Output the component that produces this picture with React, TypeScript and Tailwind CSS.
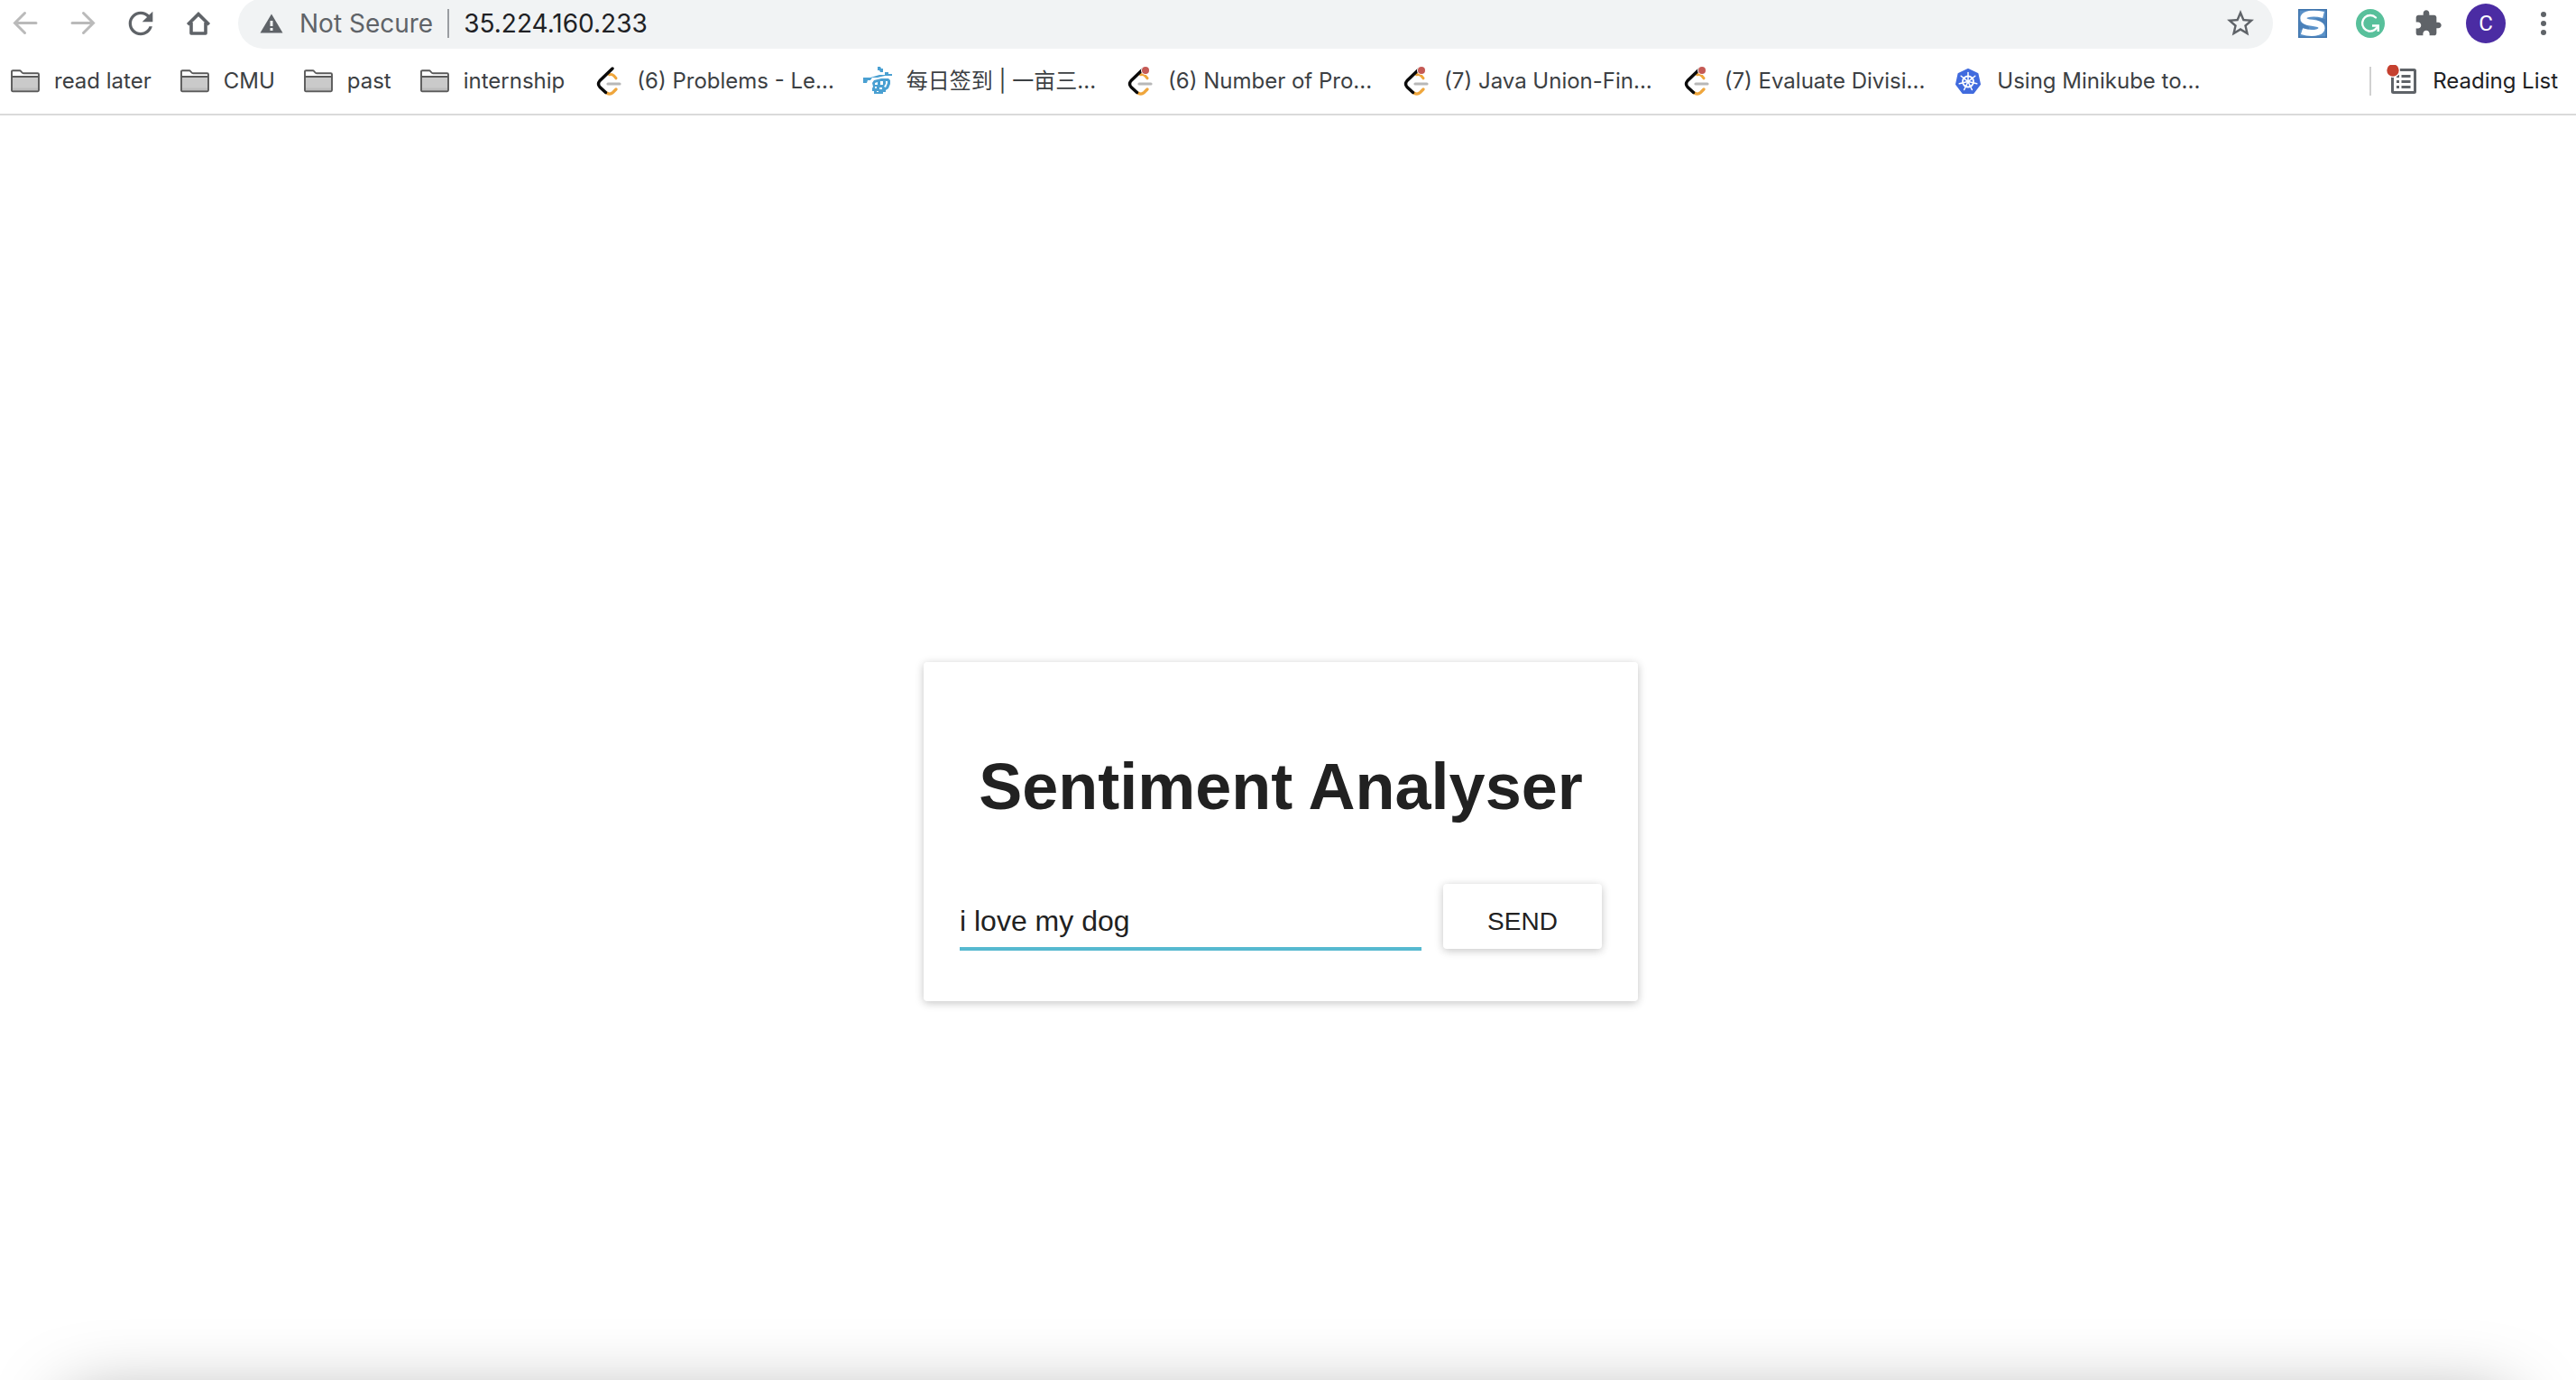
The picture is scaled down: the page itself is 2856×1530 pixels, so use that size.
import React, { useState } from "react";

type IconProps = { className?: string };

const BackIcon = ({ className = "" }: IconProps) => (
  <svg viewBox="0 0 32 32" className={`size-8 ${className}`} fill="none" stroke="currentColor" strokeWidth="3" strokeLinecap="round" aria-hidden="true">
    <path d="M28 15.5H4.5M15.5 4.5l-11 11 11 11" />
  </svg>
);

const ForwardIcon = ({ className = "" }: IconProps) => (
  <svg viewBox="0 0 32 32" className={`size-8 ${className}`} fill="none" stroke="currentColor" strokeWidth="3" strokeLinecap="round" aria-hidden="true">
    <path d="M4 15.5h23.5M16.5 4.5l11 11-11 11" />
  </svg>
);

const ReloadIcon = () => (
  <svg viewBox="0 0 24 24" className="size-10" fill="currentColor" aria-hidden="true">
    <path d="M17.65 6.35C16.2 4.9 14.21 4 12 4c-4.42 0-7.99 3.58-7.99 8s3.57 8 7.99 8c3.73 0 6.84-2.55 7.73-6h-2.08c-.82 2.33-3.04 4-5.65 4-3.31 0-6-2.69-6-6s2.69-6 6-6c1.66 0 3.14.69 4.22 1.78L13 11h7V4l-2.35 2.35z" />
  </svg>
);

const HomeIcon = () => (
  <svg viewBox="0 0 32 32" className="size-8" fill="none" stroke="currentColor" strokeWidth="3.6" strokeLinejoin="round" aria-hidden="true">
    <path d="M4.2 17.2L16 5.6l11.8 11.6" strokeLinejoin="miter" />
    <path d="M8 15v12h16V15" />
  </svg>
);

const WarningIcon = () => (
  <svg viewBox="0 0 26 22" className="h-[22px] w-[26px]" aria-hidden="true">
    <path d="M13 0.5L25.5 21.5H0.5z" fill="#5f6368" />
    <path d="M11.5 8h3v6h-3zM11.5 16h3v3h-3z" fill="#f1f3f4" />
  </svg>
);

const StarIcon = () => (
  <svg viewBox="0 0 24 24" className="size-9" fill="currentColor" aria-hidden="true">
    <path d="M22 9.24l-7.19-.62L12 2 9.19 8.63 2 9.24l5.46 4.73L5.82 21 12 17.27 18.18 21l-1.63-7.03L22 9.24zM12 15.4l-3.76 2.27 1-4.28-3.32-2.88 4.38-.38L12 6.1l1.71 4.04 4.38.38-3.32 2.88 1 4.28L12 15.4z" />
  </svg>
);

const SIcon = () => (
  <svg viewBox="0 0 32 32" className="size-8" fill="none" aria-hidden="true">
    <path d="M0 0h32v32H0z" fill="#5b92c9" />
    <path d="M18 10l12 1v10l-8-8zM2 14l10 6v3H2z" fill="#4a80b9" />
    <path d="M28 6.500C22 5 15 4.500 10 6c-5.500 1.700-5.500 7 0 8.300 4 1 9 1.200 12.500 2.500 5 2 4.500 7.200-.5 8.700-5 1.500-13 .8-18-.8" stroke="#fff" strokeWidth="7" />
    <path d="M.8.8h30.400v30.400H.8z" stroke="#3f74ad" strokeWidth="1.600" />
  </svg>
);

const GIcon = () => (
  <svg viewBox="0 0 32 32" className="size-8" fill="none" aria-hidden="true">
    <circle cx="16" cy="16" r="16" fill="#58c09b" />
    <path d="M22 9.500A8.800 8.800 0 1 0 20.500 23.300l3-3" stroke="#fff" strokeWidth="2.400" strokeLinecap="round" />
    <path d="M18 18.500h6.700v6.500" stroke="#fff" strokeWidth="2.400" />
  </svg>
);

const PuzzleIcon = () => (
  <svg viewBox="0 0 24 24" className="size-8" fill="currentColor" aria-hidden="true">
    <path d="M20.5 11H19V7c0-1.100-.9-2-2-2h-4V3.500C13 2.120 11.880 1 10.500 1S8 2.120 8 3.500V5H4c-1.100 0-1.990.9-1.990 2v3.800H3.500c1.490 0 2.700 1.210 2.700 2.700s-1.210 2.700-2.700 2.700H2V20c0 1.100.9 2 2 2h3.800v-1.500c0-1.490 1.210-2.700 2.700-2.700 1.490 0 2.700 1.210 2.700 2.700V22H17c1.100 0 2-.9 2-2v-4h1.500c1.380 0 2.500-1.120 2.500-2.500S21.880 11 20.500 11z" />
  </svg>
);

const MenuIcon = () => (
  <svg viewBox="0 0 32 32" className="size-8" fill="currentColor" aria-hidden="true">
    <circle cx="16" cy="6" r="3" />
    <circle cx="16" cy="16" r="3" />
    <circle cx="16" cy="26" r="3" />
  </svg>
);

const FolderIcon = () => (
  <svg viewBox="0 0 32 32" className="size-8 shrink-0" aria-hidden="true">
    <path d="M1 9h30v17H1z" fill="#cacaca" />
    <path d="M2 23.5h28V26H2z" fill="#bdbdbd" />
    <path d="M1 10.5V5.500Q1 4.200 2.300 4.200h7.400q1 0 1.500.8l1.300 1.500q.5.7 1.500.7h15.700Q31 7.200 31 8.500v2z" fill="#fff" />
    <path d="M1 26V5.500Q1 4.200 2.300 4.200h7.400q1 0 1.500.8l1.300 1.500q.5.7 1.500.7h15.700Q31 7.200 31 8.500V26q0 1.200-1.200 1.200H2.200Q1 27.200 1 26zM1 11h30" fill="none" stroke="#5a5a5a" strokeWidth="1.900" />
  </svg>
);

const LeetIcon = ({ notify = false }: { notify?: boolean }) => (
  <svg viewBox="0 0 32 32" className="size-8 shrink-0" fill="none" strokeLinecap="round" aria-hidden="true">
    <path d="M17.5 8.800q3-.8 5 1l2.500 3" stroke="#efa63c" strokeWidth="3" />
    <path d="M14.5 29q4 2.300 7-.5l3.500-3.500" stroke="#efa63c" strokeWidth="3.200" />
    <path d="M16 19h13" stroke="#b8b8b8" strokeWidth="3.200" />
    <path d="M21 2L7 15.500q-3 3.500 0 7l6.500 6" stroke="#0b0b0b" strokeWidth="3.400" />
    {notify && <circle cx="23" cy="4" r="5" fill="#fff" />}
    {notify && <circle cx="23" cy="4" r="4" fill="#c55a55" />}
  </svg>
);

const AcreIcon = () => (
  <svg viewBox="0 0 32 32" className="size-8 shrink-0" fill="#4aa0d2" aria-hidden="true">
    <path d="M16 0h3l1 2h2v4h-3l-1-2h-2z" />
    <path d="M0 12h8l10-3h6V6h4v2h4v2h-8l-8 2H10l-2 3H5l-1 3H0z" />
    <path d="M10 18l2-3 8-2h8l2 2v4l-2 5-3 2v2h-3v2H12v-3h-2v-3l1-2zm3 0v2h3v-3zm6-2v4h3v-4zm6 0v3l-2 3 2 1 2-5v-2zm-12 6v2h2v-2zm5 1v2h3v-2zm-3 4v1h2v-1z" fillRule="evenodd" />
  </svg>
);

const KubeIcon = () => (
  <svg viewBox="0 0 32 32" className="size-8 shrink-0" fill="none" aria-hidden="true">
    <path d="M16 3l10.500 5 2.500 11.500L21.800 29H10.200L3 19.500 5.500 8z" fill="#416bde" stroke="#416bde" strokeWidth="2" strokeLinejoin="round" />
    <g stroke="#fff">
      <circle cx="16" cy="16.500" r="6" strokeWidth="1.800" />
      {[0, 1, 2, 3, 4, 5, 6].map((n) => (
        <path key={n} d="M16 15V6.500" strokeWidth="1.500" strokeLinecap="round" transform={`rotate(${(n * 360) / 7} 16 16.5)`} />
      ))}
    </g>
    <circle cx="16" cy="16.500" r="1.800" fill="#fff" />
  </svg>
);

const ReadingListIcon = () => (
  <svg viewBox="0 0 36 36" className="size-9 shrink-0" fill="none" aria-hidden="true">
    <rect x="7.5" y="5.500" width="25" height="25" rx="1" stroke="#5f6368" strokeWidth="3" />
    <path d="M12 12.500h3M12 18.500h3M12 24.500h3M17.500 12.500h10M17.500 18.500h10M17.500 24.500h10" stroke="#5f6368" strokeWidth="2.800" />
    <circle cx="8" cy="6" r="8" fill="#fff" />
    <circle cx="8" cy="6" r="6.700" fill="#c5402f" />
  </svg>
);

const bookmarks: { label: string; icon: React.ReactNode }[] = [
  { label: "read later", icon: <FolderIcon /> },
  { label: "CMU", icon: <FolderIcon /> },
  { label: "past", icon: <FolderIcon /> },
  { label: "internship", icon: <FolderIcon /> },
  { label: "(6) Problems - Le...", icon: <LeetIcon /> },
  { label: "每日签到 | 一亩三...", icon: <AcreIcon /> },
  { label: "(6) Number of Pro...", icon: <LeetIcon notify /> },
  { label: "(7) Java Union-Fin...", icon: <LeetIcon notify /> },
  { label: "(7) Evaluate Divisi...", icon: <LeetIcon notify /> },
  { label: "Using Minikube to...", icon: <KubeIcon /> },
];

function ToolButton({ label, disabled, children }: { label: string; disabled?: boolean; children: React.ReactNode }) {
  return (
    <button type="button" aria-label={label} disabled={disabled} className="flex h-14 w-14 shrink-0 items-center justify-center text-[#5f6368] disabled:text-[#bababa]">
      {children}
    </button>
  );
}

function Toolbar() {
  const [url, setUrl] = useState("35.224.160.233");
  return (
    <div className="-mt-0.5 flex h-14 items-center gap-4 pr-2">
      <nav aria-label="Navigation" className="flex gap-2">
        <ToolButton label="Back" disabled><BackIcon /></ToolButton>
        <ToolButton label="Forward" disabled><ForwardIcon /></ToolButton>
        <ToolButton label="Reload"><ReloadIcon /></ToolButton>
        <ToolButton label="Home"><HomeIcon /></ToolButton>
      </nav>
      <div className="flex h-14 min-w-0 flex-1 items-center rounded-full bg-[#f1f3f4] pr-2 pl-6 text-[28px]">
        <button type="button" className="flex shrink-0 items-center gap-[18px] text-[#5f6368]">
          <WarningIcon />
          <span>Not Secure</span>
        </button>
        <span className="mx-4 h-8 w-0.5 shrink-0 bg-[#9a9da1]" />
        <input
          aria-label="Address"
          value={url}
          onChange={(e) => setUrl(e.target.value)}
          className="h-full min-w-0 flex-1 bg-transparent text-[#202124] outline-none"
        />
        <ToolButton label="Bookmark this page"><StarIcon /></ToolButton>
      </div>
      <div className="flex gap-2">
        <ToolButton label="S extension"><SIcon /></ToolButton>
        <ToolButton label="Grammar extension"><GIcon /></ToolButton>
        <ToolButton label="Extensions"><PuzzleIcon /></ToolButton>
        <ToolButton label="Profile">
          <span className="flex size-11 items-center justify-center rounded-full bg-[#4b2ca3] font-['Roboto',sans-serif] text-[24px] text-white">C</span>
        </ToolButton>
        <ToolButton label="Menu"><MenuIcon /></ToolButton>
      </div>
    </div>
  );
}

function BookmarksBar() {
  return (
    <div className="flex h-[74px] items-center justify-between border-b-2 border-[#dadada] pr-5 pl-3 text-[24px]">
      <nav aria-label="Bookmarks" className="flex items-center gap-8">
        {bookmarks.map((b) => (
          <a key={b.label} href="#" className="flex items-center gap-4 whitespace-nowrap text-[#3c4043]">
            {b.icon}
            <span>{b.label}</span>
          </a>
        ))}
      </nav>
      <div className="flex items-center gap-4">
        <span className="h-8 w-0.5 bg-[#d0d0d0]" />
        <button type="button" className="flex items-center gap-4 whitespace-nowrap text-[#202124]">
          <ReadingListIcon />
          <span>Reading List</span>
        </button>
      </div>
    </div>
  );
}

function SentimentCard() {
  const [sentence, setSentence] = useState("i love my dog");
  return (
    <section className="w-[792px] rounded-[4px] bg-white px-10 pt-24 pb-14 font-['Liberation_Sans',Arial,sans-serif] text-[#212121] shadow-[0_2px_12px_rgba(0,0,0,0.12),0_2px_8px_rgba(0,0,0,0.12)]">
      <h1 className="text-center text-[72px] leading-[84px] font-bold whitespace-nowrap">Sentiment Analyser</h1>
      <form className="mt-[66px] flex items-start gap-6" onSubmit={(e) => e.preventDefault()}>
        <input
          aria-label="Type your sentence."
          value={sentence}
          onChange={(e) => setSentence(e.target.value)}
          className="h-[74px] min-w-0 flex-1 border-b-4 border-[#56b9d0] pt-3 text-[32px] outline-none"
        />
        <button
          type="submit"
          className="h-[72px] w-44 rounded-[4px] bg-white pt-3 text-[28px] shadow-[0_2px_12px_rgba(0,0,0,0.12),0_2px_8px_rgba(0,0,0,0.12)]"
        >
          SEND
        </button>
      </form>
    </section>
  );
}

export default function App() {
  return (
    <div className="relative flex min-h-screen flex-col overflow-hidden bg-white font-['Inter','Noto_Sans_CJK_SC',sans-serif]">
      <header>
        <Toolbar />
        <BookmarksBar />
      </header>
      <main className="flex flex-1 items-center justify-center pt-[186px] pr-4">
        <SentimentCard />
      </main>
      <div className="pointer-events-none absolute inset-x-[72px] top-full mt-5 h-60 rounded-[20px] shadow-[0_0_80px_rgba(0,0,0,0.34)]" />
    </div>
  );
}
